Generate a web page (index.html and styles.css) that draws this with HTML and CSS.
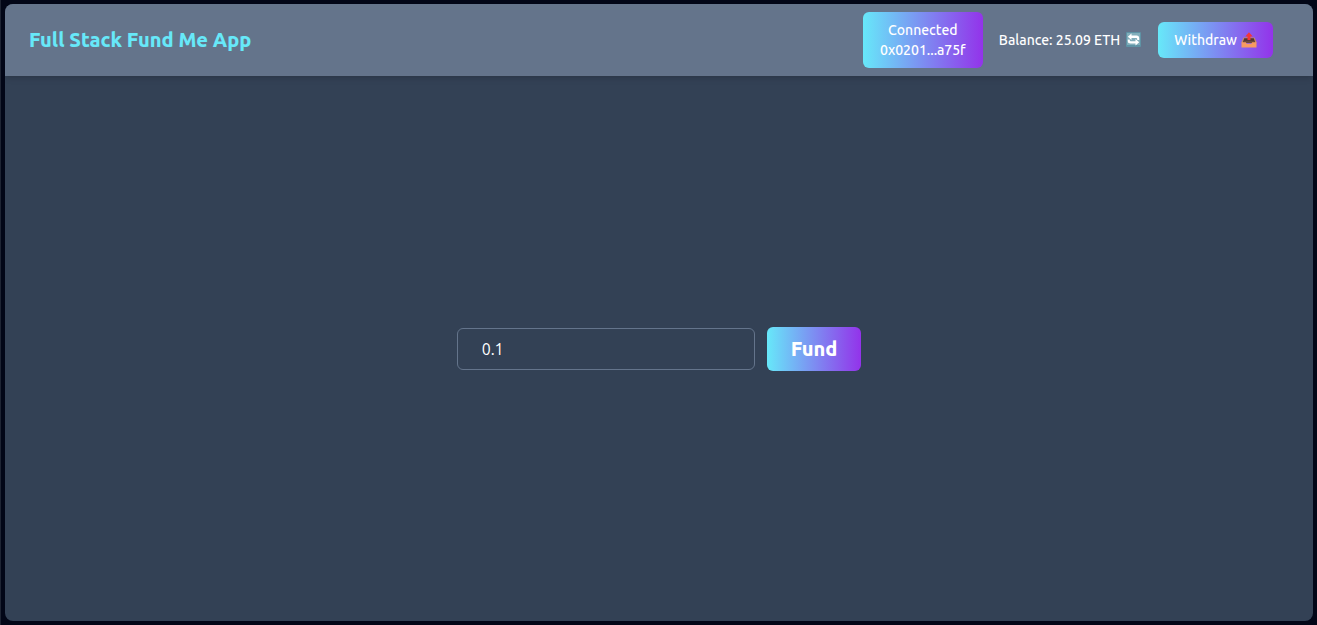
FILE: index.html
```html
<!DOCTYPE html>
<html lang="en">
<head>
<meta charset="utf-8">
<meta name="viewport" content="width=device-width, initial-scale=1">
<title>Full Stack Fund Me App</title>
<link rel="stylesheet" href="styles.css">
</head>
<body>
<div class="app">
  <header class="header">
    <h1 class="title">Full Stack Fund Me App</h1>
    <div class="actions">
      <button class="button connect" type="button">Connected<br>0x0201...a75f</button>
      <div class="balance">
        <span>Balance: 25.09 ETH</span>
        <button class="refresh" type="button" aria-label="Refresh balance">
          <svg class="icon" viewBox="0 0 16 16" aria-hidden="true">
            <rect width="15" height="15" rx="1" fill="#5e93a5"/>
            <rect x="1" y="1" width="13" height="12" fill="#82aebb"/>
            <path d="M5.500 1.500 1.800 4.700 5.500 8V6h4.700q1 0 1 1v1h2V6.300Q13.200 3.600 10.500 3.600h-5zM9.500 7l3.700 3.200-3.700 3.300v-2H4.500Q1.800 11.500 1.800 9V7.500h2v.800q0 1 1 1h4.700z" fill="#fff"/>
          </svg>
        </button>
      </div>
      <button class="button" type="button">
        <span>Withdraw</span>
        <svg class="icon" viewBox="0 0 16 16" aria-hidden="true">
          <path d="M2.500 5.500h11L15.500 10v1H.500v-1z" fill="#c98b63"/>
          <path d="M3.200 6.300h9.600l1.400 4.200H1.800z" fill="#513734"/>
          <path d="M2.800 8.700h10.400l.800 2.300H2z" fill="#6e4a3d"/>
          <path d="M.500 10.300h4.300l.900 1.500h4.600l.900-1.500h4.300v5.200H.500z" fill="#f79a62"/>
          <path d="M8 .200 11.700 4.500H9.500V8h-3V4.500H4.300z" fill="#f43636"/>
        </svg>
      </button>
    </div>
  </header>
  <main class="main">
    <form class="fund-form">
      <input class="amount" type="text" value="0.1" aria-label="Amount in ETH">
      <button class="button fund" type="button">Fund</button>
    </form>
  </main>
</div>
</body>
</html>
```

FILE: styles.css
```css
* {
  box-sizing: border-box;
}

body {
  margin: 0;
  min-height: 100vh;
  display: flex;
  padding: 4px;
  border-left: 1px solid #1e2433;
  background: #020617;
  color: #fff;
  font-family: Ubuntu, "Noto Sans", sans-serif;
}

button,
input {
  font-family: inherit;
  color: inherit;
}

.app {
  flex: 1;
  display: flex;
  flex-direction: column;
  overflow: hidden;
  border-radius: 8px;
  background: #334155;
}

.header {
  display: flex;
  align-items: center;
  justify-content: space-between;
  padding: 8px 40px 8px 24px;
  background: #64748b;
  box-shadow: 0 4px 6px -1px rgb(0 0 0 / 10%), 0 2px 4px -2px rgb(0 0 0 / 10%);
}

.title {
  margin: 0;
  font-size: 20px;
  line-height: 28px;
  font-weight: 800;
  color: #67e8f9;
}

.actions {
  display: flex;
  align-items: center;
  gap: 16px;
  font-size: 14px;
  line-height: 20px;
  font-weight: 500;
}

.button {
  display: flex;
  align-items: center;
  justify-content: center;
  gap: 4px;
  padding: 8px 16px;
  border: 0;
  border-radius: 6px;
  background: linear-gradient(to right, #67e8f9, #9333ea);
  font-size: 14px;
  line-height: 20px;
  font-weight: 500;
}

.connect {
  display: block;
  min-width: 120px;
  text-align: center;
}

.balance {
  display: flex;
  align-items: center;
  gap: 6px;
}

.refresh {
  display: flex;
  padding: 0;
  border: 0;
  background: none;
}

.icon {
  display: block;
  width: 16px;
  height: 16px;
}

.main {
  flex: 1;
  display: flex;
  align-items: center;
  justify-content: center;
}

.fund-form {
  display: flex;
  align-items: center;
  gap: 12px;
}

.amount {
  width: 298px;
  padding: 8px 24px;
  border: 1px solid #64748b;
  border-radius: 6px;
  background: transparent;
  font-size: 16px;
  line-height: 24px;
}

.fund {
  padding: 8px 24px;
  font-size: 20px;
  line-height: 28px;
  font-weight: 800;
}
```
